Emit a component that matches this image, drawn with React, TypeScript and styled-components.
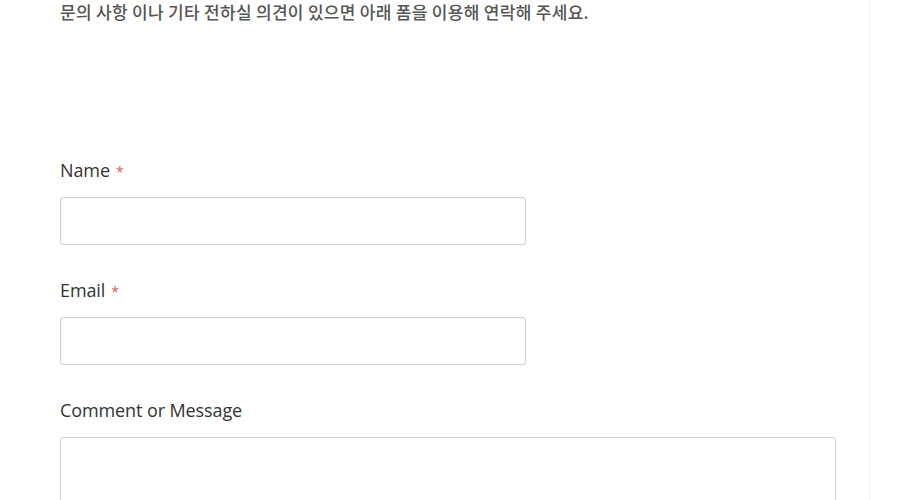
import React from "react";
import styled, { createGlobalStyle } from "styled-components";

const Global = createGlobalStyle`
  html, body { margin: 0; padding: 0; background: #fff; }
  body { font-family: "Open Sans", "Noto Sans CJK KR", sans-serif; }
  * { box-sizing: border-box; }
`;

const Page = styled.div`
  width: 900px;
  height: 500px;
  overflow: hidden;
  display: flex;
`;

const Main = styled.main`
  width: 870px;
  padding: 0 0 0 60px;
  border-right: 1px solid #f0f0f0;
`;

const Intro = styled.p`
  margin: 0;
  font-family: "Noto Sans CJK KR", sans-serif;
  font-size: 17px;
  font-weight: 500;
  line-height: 24px;
  color: #555;
  letter-spacing: 0.3px;
`;

const Form = styled.form`
  margin-top: 135px;
  display: flex;
  flex-direction: column;
  gap: 34px;
`;

const Field = styled.div`
  display: flex;
  flex-direction: column;
  gap: 16px;
`;

const Label = styled.label`
  display: block;
  height: 22px;
  font-family: "Open Sans", sans-serif;
  font-size: 18px;
  line-height: 22px;
  color: #333;
  letter-spacing: -0.1px;
`;

const Req = styled.span`
  color: #d0605c;
  font-size: 14px;
  margin-left: 6px;
`;

const Input = styled.input`
  display: block;
  width: 466px;
  height: 48px;
  margin: 0;
  border: 1px solid #cfcfcf;
  border-radius: 3px;
  background: #fff;
  box-shadow: inset 0 1px 2px rgba(0,0,0,0.04);
`;

const Textarea = styled.textarea`
  display: block;
  width: 776px;
  height: 120px;
  margin: 0;
  border: 1px solid #cfcfcf;
  border-radius: 3px;
  background: #fff;
  resize: none;
`;

export default function App() {
  return (
    <>
      <Global />
      <Page>
        <Main>
          <Intro>문의 사항 이나 기타 전하실 의견이 있으면 아래 폼을 이용해 연락해 주세요.</Intro>
          <Form>
            <Field>
              <Label>Name<Req>*</Req></Label>
              <Input />
            </Field>
            <Field>
              <Label>Email<Req>*</Req></Label>
              <Input />
            </Field>
            <Field>
              <Label>Comment or Message</Label>
              <Textarea />
            </Field>
          </Form>
        </Main>
      </Page>
    </>
  );
}
